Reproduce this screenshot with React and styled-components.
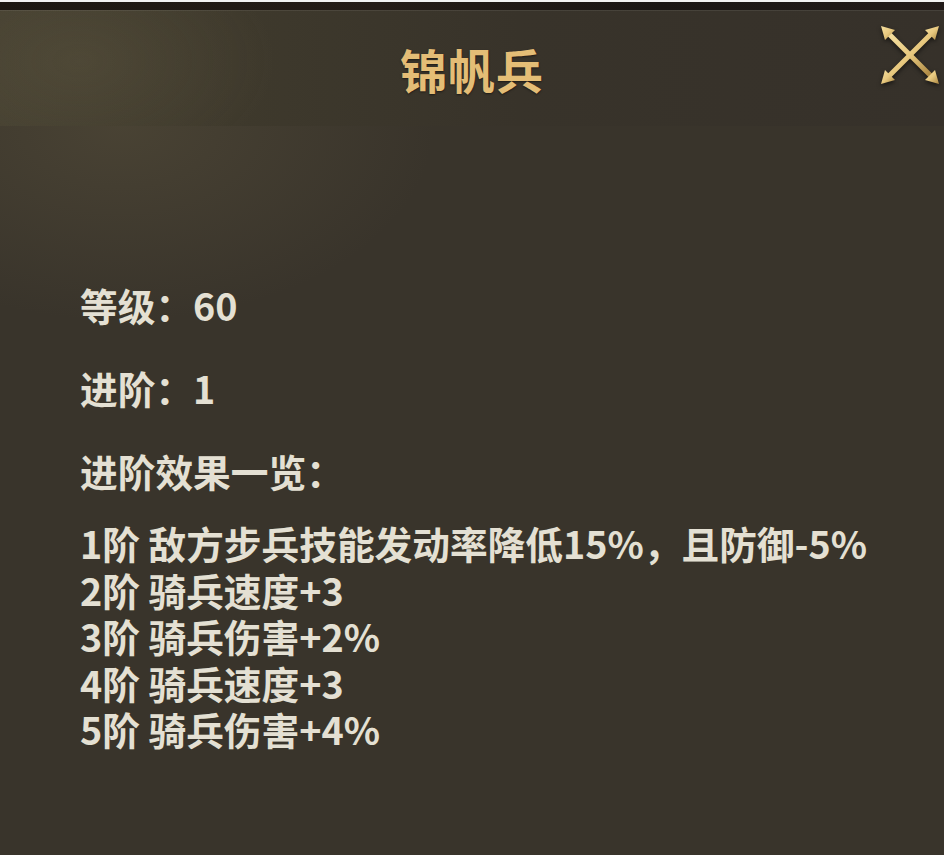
import styled, { createGlobalStyle } from "styled-components";

const GlobalStyle = createGlobalStyle`
    body {
        margin: 0;
        background: #38332b;
        font-family: "Noto Sans CJK SC", "Noto Sans", sans-serif;
    }
`;

const stats = [
    { label: "等级", value: "60" },
    { label: "进阶", value: "1" },
];

const effects = [
    "1阶 敌方步兵技能发动率降低15%，且防御-5%",
    "2阶 骑兵速度+3",
    "3阶 骑兵伤害+2%",
    "4阶 骑兵速度+3",
    "5阶 骑兵伤害+4%",
];

function CloseIcon() {
    return (
        <svg width="62" height="62" viewBox="0 0 62 62">
            <defs>
                <linearGradient id="gold" x1="0" y1="0" x2="1" y2="1">
                    <stop offset="0" stopColor="#f4dfa0" />
                    <stop offset="0.5" stopColor="#e8c97f" />
                    <stop offset="1" stopColor="#a9843f" />
                </linearGradient>
            </defs>
            <g stroke="url(#gold)" strokeWidth="5" strokeLinecap="round">
                <line x1="10" y1="10" x2="52" y2="52" />
                <line x1="52" y1="10" x2="10" y2="52" />
            </g>
            <g fill="url(#gold)">
                <polygon points="2,2 16,6 6,16" />
                <polygon points="60,2 56,16 46,6" />
                <polygon points="2,60 6,46 16,56" />
                <polygon points="60,60 46,56 56,46" />
            </g>
        </svg>
    );
}

export default function App() {
    return (
        <Page>
            <GlobalStyle />
            <TopStrip />
            <Header>
                <span />
                <Title>锦帆兵</Title>
                <CloseButton aria-label="关闭">
                    <CloseIcon />
                </CloseButton>
            </Header>
            <Body>
                {stats.map(stat =>
                    <Stat key={stat.label}>{stat.label}：{stat.value}</Stat>
                )}
                <Stat last={true}>进阶效果一览：</Stat>
                <List>
                    {effects.map(effect =>
                        <Item key={effect}>{effect}</Item>
                    )}
                </List>
            </Body>
        </Page>
    );
}

const Page = styled.div`
    width: 944px;
    min-height: 855px;
    display: flex;
    flex-direction: column;
    background: #38332b;
    overflow: hidden;
`;

const TopStrip = styled.div`
    height: 8px;
    border-top: 2px solid #f2f2f2;
    background: linear-gradient(90deg, #1c1712 0%, #241c17 40%, #1a1614 70%, #221b19 100%);
`;

const Header = styled.header`
    height: 115px;
    display: grid;
    grid-template-columns: 1fr auto 1fr;
    align-items: center;
    border-top: 1px solid rgba(255, 255, 255, 0.08);
    background:
        radial-gradient(ellipse 260px 160px at 80px 50px, rgba(130, 118, 85, 0.18), transparent 75%),
        linear-gradient(90deg, #454031 0%, #3e392c 25%, #38332a 55%, #36312a 100%);
`;

const Title = styled.h1`
    margin: 0;
    font-size: 47px;
    font-weight: 700;
    color: #e4bd76;
    letter-spacing: 1px;
    text-shadow: 0 1px 2px rgba(0, 0, 0, 0.5);
`;

const CloseButton = styled.button`
    justify-self: end;
    margin-right: 3px;
    margin-top: -28px;
    padding: 0;
    border: none;
    background: none;
    cursor: pointer;
    display: flex;
    filter: drop-shadow(0 2px 2px rgba(0, 0, 0, 0.55));
`;

const Body = styled.main`
    flex: 1;
    padding: 155px 0 60px 80px;
    background:
        radial-gradient(ellipse 420px 260px at 120px 0px, rgba(110, 100, 72, 0.3), transparent 75%),
        #39342b;
    color: #e4e0d3;
`;

const Stat = styled.p`
    margin: 0 0 ${props => props.last ? '26px' : '36px'};
    font-size: 37.7px;
    line-height: 47px;
    font-weight: 700;
`;

const List = styled.ul`
    margin: 0;
    padding: 0;
    list-style: none;
`;

const Item = styled.li`
    font-size: 37.7px;
    line-height: 46.6px;
    font-weight: 700;
    white-space: nowrap;
`;
